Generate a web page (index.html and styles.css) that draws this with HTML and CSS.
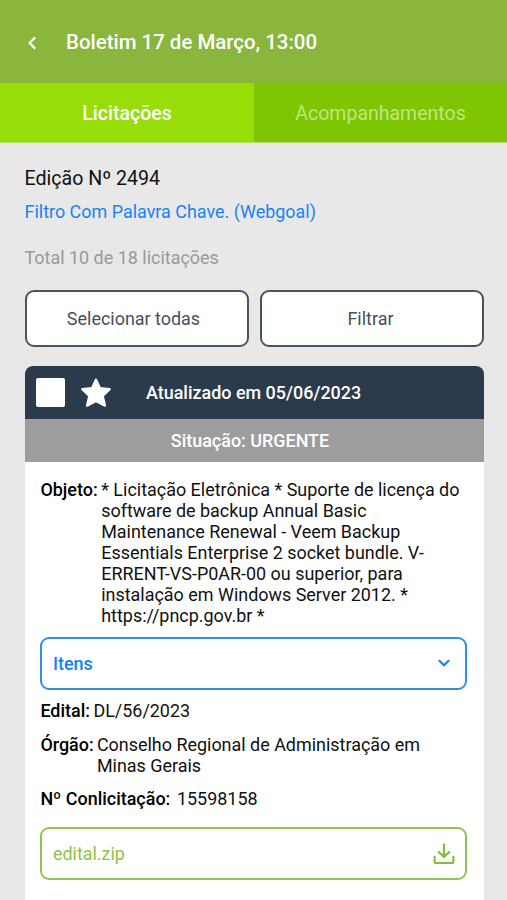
FILE: index.html
```html
<!DOCTYPE html>
<html lang="pt-BR">
<head>
<meta charset="utf-8">
<meta name="viewport" content="width=device-width, initial-scale=1">
<title>Boletim</title>
<link rel="stylesheet" href="styles.css">
</head>
<body>
<header class="topbar">
  <svg class="back" viewBox="0 0 10 14" fill="none" stroke="#fff" stroke-width="2.2"><path d="M8.2 1.4 2.6 7l5.6 5.6"/></svg>
  <h1 class="title">Boletim 17 de Março, 13:00</h1>
</header>
<nav class="tabs">
  <div class="tab active"><span class="tab-a">Licitações</span></div>
  <div class="tab"><span class="tab-b">Acompanhamentos</span></div>
</nav>
<main class="content">
  <p class="edition"><span>Edição Nº 2494</span></p>
  <p class="filter"><span>Filtro Com Palavra Chave. (Webgoal)</span></p>
  <p class="total"><span>Total 10 de 18 licitações</span></p>
  <div class="actions">
    <button class="btn select-all"><span>Selecionar todas</span></button>
    <button class="btn"><span>Filtrar</span></button>
  </div>
  <article class="card">
    <div class="card-head">
      <span class="check"></span>
      <svg class="star" viewBox="0 0 32 30" fill="#fff" stroke="#fff" stroke-width="2.4" stroke-linejoin="round"><path d="M16 1.8 19.9 10.2 29.7 11.2 22.6 17.9 24.9 27.6 16 23 7.1 27.6 9.4 17.9 2.3 11.2 12.1 10.2Z"/></svg>
      <span class="updated">Atualizado em 05/06/2023</span>
    </div>
    <div class="status"><span>Situação: URGENTE</span></div>
    <div class="card-body">
      <div class="row object"><b>Objeto:</b><span>* Licitação Eletrônica * Suporte de licença do<br>software de backup Annual Basic<br>Maintenance Renewal - Veem Backup<br>Essentials Enterprise 2 socket bundle. V-<br>ERRENT-VS-P0AR-00 ou superior, para<br>instalação em Windows Server 2012. *<br>https://pncp.gov.br *</span></div>
      <div class="box items"><b>Itens</b>
        <svg class="chevron" viewBox="0 0 14 10" fill="none" stroke="#1580f5" stroke-width="2.2"><path d="M1.8 2.2 7 7.2l5.2-5"/></svg>
      </div>
      <div class="row edital"><b>Edital:</b><span>DL/56/2023</span></div>
      <div class="row orgao"><b>Órgão:</b><span>Conselho Regional de Administração em<br>Minas Gerais</span></div>
      <div class="row number"><b>Nº Conlicitação:</b><span>15598158</span></div>
      <div class="box file"><span>edital.zip</span>
        <svg class="download" viewBox="0 0 22 22" fill="none" stroke="#8aba3c" stroke-width="2.2" stroke-linecap="round" stroke-linejoin="round"><path d="M11 1.6v12.2M5.8 9l5.2 5 5.2-5M1.6 13.8v4.6a1.6 1.6 0 0 0 1.6 1.6h15.6a1.6 1.6 0 0 0 1.6-1.6v-4.6"/></svg>
      </div>
    </div>
  </article>
</main>
</body>
</html>
```
FILE: styles.css
```css
* { box-sizing: border-box; }
body {
  margin: 0;
  height: 900px;
  overflow: hidden;
  background: #e8e8e8;
  color: #111;
  font: 17.95px/21.1px Roboto, sans-serif;
}
h1, p { margin: 0; }
b { font-weight: 500; color: #000; }
.topbar {
  height: 83px;
  padding: 2px 0 0 27px;
  display: flex;
  align-items: center;
  background: #8ab63e;
}
.back { width: 10px; height: 14px; }
.title { margin-left: 29px; color: #fff; font-size: 20.45px; font-weight: 500; }
.tabs {
  height: 60px;
  display: grid;
  grid-template-columns: 254px 1fr;
  border-bottom: 1px solid #b5dd72;
}
.tab {
  padding-top: 2px;
  display: flex;
  align-items: center;
  justify-content: center;
  background: #7ec603;
  color: #c0e57f;
  font-size: 19.5px;
}
.active { background: #97de09; color: #fff; font-weight: 500; }
.content { padding: 23px 23.5px 0 24.5px; }
.edition { height: 26px; line-height: 26px; font-size: 19.6px; color: #111; }
.filter { margin-top: 8px; height: 24px; line-height: 24px; color: #1a82f7; }
.total { margin-top: 22px; height: 24px; line-height: 24px; color: #999; }
.actions { margin-top: 20px; display: grid; grid-template-columns: 1fr 1fr; gap: 11px; }
.btn {
  height: 57px;
  padding: 0 2px 0 0;
  border: 2px solid #475463;
  border-radius: 9px;
  background: #fff;
  color: #46505f;
  font: inherit;
}
.select-all { padding-right: 6px; }
.card { margin-top: 19px; background: #fff; border-radius: 8px 8px 0 0; overflow: hidden; height: 560px; }
.card-head { height: 53px; padding-left: 11.8px; display: flex; align-items: center; background: #2b3b4c; color: #fff; }
.check { width: 29px; height: 29px; border-radius: 2px; background: #fff; }
.star { width: 32px; height: 30px; margin-left: 14.6px; }
.updated { margin-left: 34.1px; font-weight: 500; }
.status { height: 43px; padding-right: 8px; display: flex; align-items: center; justify-content: center; background: #9d9d9d; color: #fff; font-weight: 500; }
.card-body { padding: 16.5px 16.5px 0 15.9px; }
.row { display: flex; white-space: nowrap; }
.object b { width: 60.8px; }
.object span { flex: 1; }
.box {
  height: 53px;
  padding: 0 14px 0 10.5px;
  display: flex;
  align-items: center;
  justify-content: space-between;
  border: 2px solid;
  border-radius: 9px;
}
.items { margin-top: 10.5px; border-color: #338ceb; color: #1580f5; }
.items b { color: #1580f5; }
.chevron { width: 14px; height: 10px; }
.edital { margin-top: 10.5px; }
.edital b { width: 53px; }
.orgao { margin-top: 12.6px; }
.orgao b { width: 56.5px; }
.number { margin-top: 11.9px; }
.number b { width: 136.5px; }
.file { margin-top: 17.5px; padding: 1px 10px 0 10.5px; border-color: #91c255; color: #91c24c; }
.download { width: 22px; height: 22px; }
```
